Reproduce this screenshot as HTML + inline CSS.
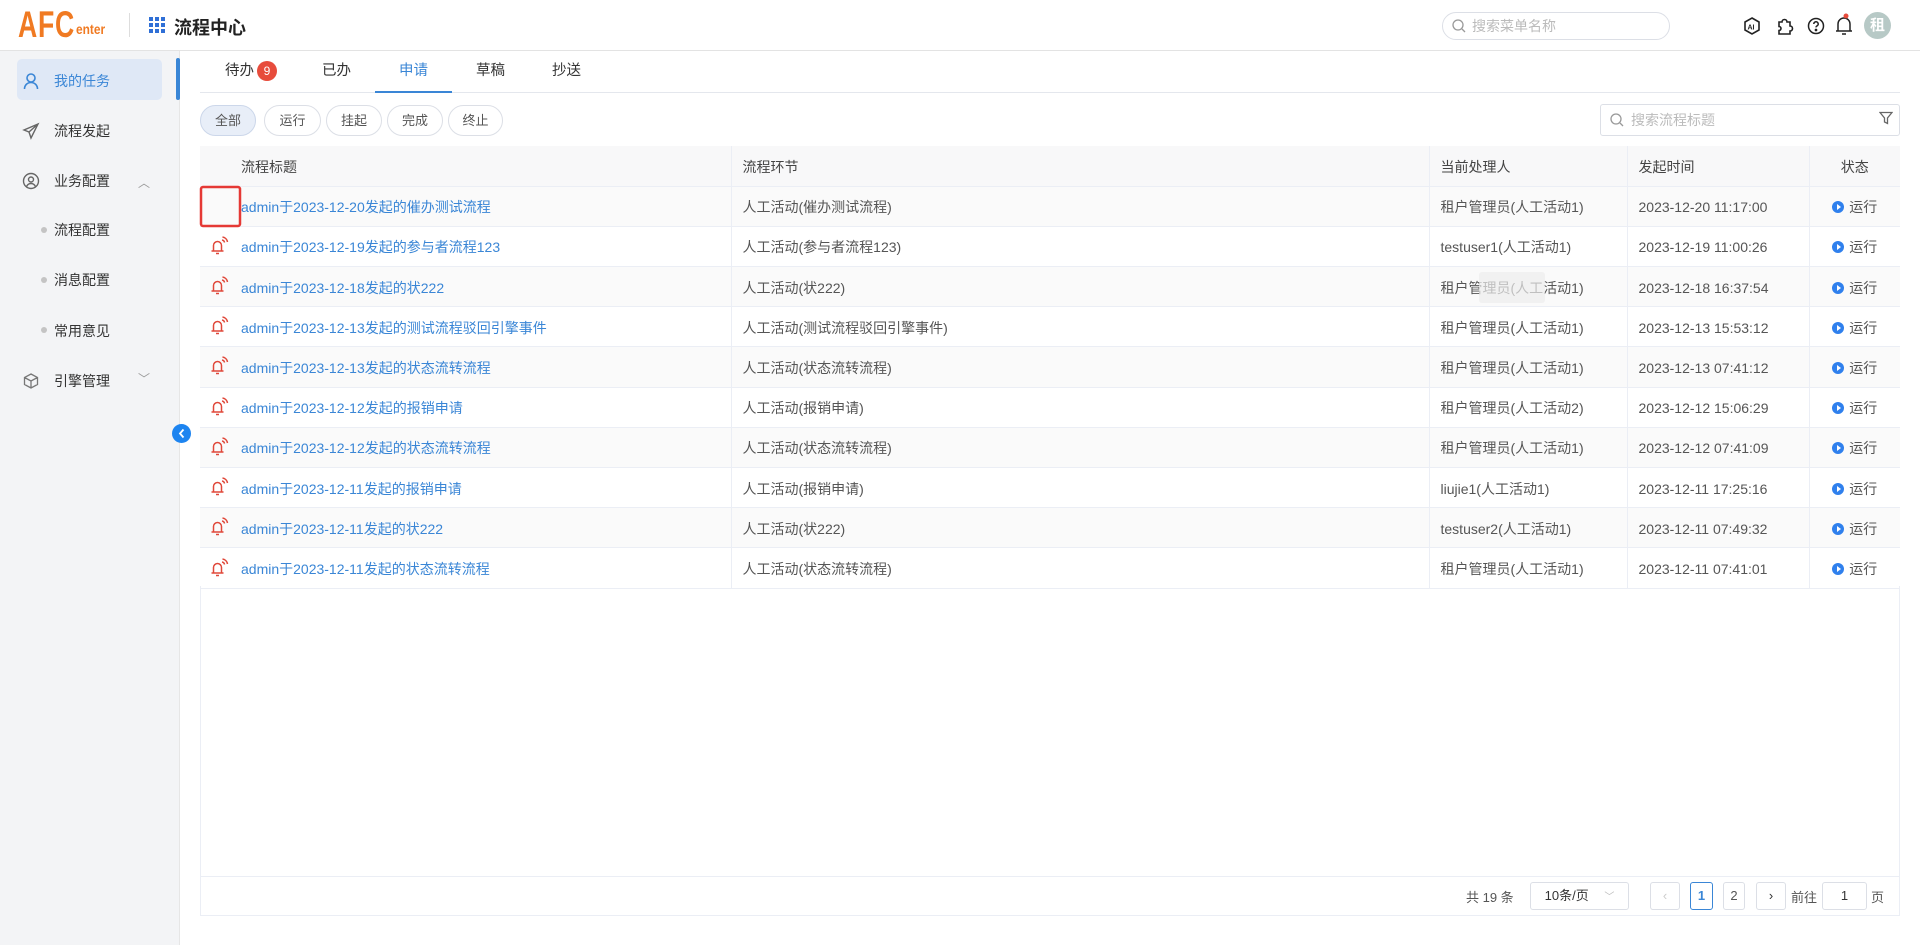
<!DOCTYPE html>
<html><head><meta charset="utf-8"><style>
*{box-sizing:border-box;margin:0;padding:0}
body{width:1920px;height:945px;overflow:hidden;background:#fff;font-family:"Liberation Sans","Noto Sans CJK SC",sans-serif;color:#555;font-size:14px;position:relative}
.abs{position:absolute}
.hdr{left:0;top:0;width:1920px;height:51px;border-bottom:1px solid #e3e3e3;background:#fff}
.side{left:0;top:51px;width:180px;height:894px;background:#f3f4f6;border-right:1px solid #e6e6e6}
.mi{position:absolute;left:54px;font-size:14px;color:#333;line-height:20px}
.ic{position:absolute;left:22px}
.dot{position:absolute;left:41px;width:6px;height:6px;border-radius:50%;background:#c4c4c4}
.tab{position:absolute;top:61px;font-size:14.5px;color:#333;line-height:20px}
.fb{position:absolute;top:105px;height:31px;border:1px solid #dcdfe6;border-radius:16px;font-size:13px;color:#555;text-align:center;line-height:29px;background:#fff}
table{position:absolute;left:200px;top:146px;width:1700px;border-collapse:collapse;table-layout:fixed}
td,th{height:40.2px;border-bottom:1px solid #ebeef5;font-weight:normal;text-align:left;padding-left:0;padding-top:2px;font-size:14px;color:#555;white-space:nowrap}
th{background:#f8f8f9;color:#444}
td+td,th+th{border-left:1px solid #ebeef5}
tr:nth-child(even) td{background:#fafafa}
.c1{padding-left:41px;color:#3a86d6}
.c2,.c3,.c4{padding-left:11px}
.c5{text-align:center}
.run{display:inline-block;width:12px;height:12px;border-radius:50%;background:#2f80ed;vertical-align:-1px;margin-right:5px;position:relative}
.run:after{content:"";position:absolute;left:4.5px;top:3px;border-left:4px solid #fff;border-top:3px solid transparent;border-bottom:3px solid transparent}
.pg{position:absolute;top:882px;height:28px;border:1px solid #dcdfe6;border-radius:3px;text-align:center;line-height:26px;font-size:13px;color:#555;background:#fff}
</style></head><body>
<div class="abs hdr"></div>
<div class="abs" style="left:18px;top:4px;font-size:37px;font-weight:bold;color:#f07a22;letter-spacing:1px;transform:scaleX(.72);transform-origin:left;white-space:nowrap">AFC</div>
<div class="abs" style="left:76px;top:21px;font-size:14px;font-weight:bold;color:#f07a22;transform:scaleX(.85);transform-origin:left">enter</div>
<div class="abs" style="left:129px;top:13px;width:1px;height:24px;background:#ddd"></div>
<svg class="abs" style="left:149px;top:17px" width="17" height="17" viewBox="0 0 17 17" fill="#2f6fd6"><rect x="0" y="0" width="4" height="4"/><rect x="6" y="0" width="4" height="4"/><rect x="12" y="0" width="4" height="4"/><rect x="0" y="6" width="4" height="4"/><rect x="6" y="6" width="4" height="4"/><rect x="12" y="6" width="4" height="4"/><rect x="0" y="12" width="4" height="4"/><rect x="6" y="12" width="4" height="4"/><rect x="12" y="12" width="4" height="4"/></svg>
<div class="abs" style="left:174px;top:14px;font-size:18px;font-weight:bold;color:#222">流程中心</div>
<div class="abs" style="left:1442px;top:12px;width:228px;height:28px;border:1px solid #dcdfe6;border-radius:14px"></div>
<svg class="abs" style="left:1452px;top:19px" width="14" height="14" viewBox="0 0 14 14" fill="none" stroke="#999" stroke-width="1.3"><circle cx="6" cy="6" r="5"/><path d="M10 10l3 3"/></svg>
<div class="abs" style="left:1472px;top:16px;font-size:14px;color:#bbb">搜索菜单名称</div>
<svg class="abs" style="left:1742px;top:16px" width="20" height="20" viewBox="0 0 20 20" fill="none" stroke="#222" stroke-width="1.6"><path d="M10 2l7 4v8l-7 4-7-4V6z"/><text x="5.5" y="13.5" font-size="7" fill="#222" stroke="none" font-weight="bold" font-family="Liberation Sans">AI</text></svg>
<svg class="abs" style="left:1775px;top:16px" width="20" height="20" viewBox="0 0 20 20" fill="none" stroke="#222" stroke-width="1.6"><path d="M4 6h3a2.5 2.5 0 1 1 5 0h3v4a2.5 2.5 0 1 1 0 5v3H4v-3.5a2 2 0 1 0 0-4z"/></svg>
<svg class="abs" style="left:1807px;top:17px" width="18" height="18" viewBox="0 0 18 18" fill="none" stroke="#222" stroke-width="1.5"><circle cx="9" cy="9" r="7.5"/><path d="M6.8 7a2.2 2.2 0 1 1 3 2c-.6.3-.8.7-.8 1.4"/><circle cx="9" cy="13" r=".6" fill="#222"/></svg>
<svg class="abs" style="left:1834px;top:13px" width="20" height="24" viewBox="0 0 20 24" fill="none" stroke="#222" stroke-width="1.5"><path d="M4 18V11a6 6 0 0 1 12 0v7M2 18h16M8 21h4"/><circle cx="12" cy="3" r="2.5" fill="#e74c3c" stroke="none"/></svg>
<div class="abs" style="left:1864px;top:12px;width:27px;height:27px;border-radius:50%;background:#b7c9c6;color:#fff;font-size:15px;font-weight:bold;text-align:center;line-height:27px">租</div>

<div class="abs side"></div>
<div class="abs" style="left:17px;top:59px;width:145px;height:41px;background:#dfe8f6;border-radius:5px"></div>
<div class="abs" style="left:176px;top:58px;width:4px;height:42px;background:#3a86d6;border-radius:2px"></div>
<svg class="ic" style="top:72px" width="18" height="18" viewBox="0 0 18 18" fill="none" stroke="#3a86d6" stroke-width="1.6"><circle cx="9" cy="6" r="4"/><path d="M2.5 17c0-4 3-6.5 6.5-6.5s6.5 2.5 6.5 6.5"/></svg>
<div class="mi" style="top:71px;color:#3a86d6">我的任务</div>
<svg class="ic" style="top:122px" width="18" height="18" viewBox="0 0 18 18" fill="none" stroke="#666" stroke-width="1.4"><path d="M16 2L2 8l5 2 2 6z M7 10l9-8"/></svg>
<div class="mi" style="top:121px">流程发起</div>
<svg class="ic" style="top:172px" width="18" height="18" viewBox="0 0 18 18" fill="none" stroke="#666" stroke-width="1.4"><circle cx="9" cy="9" r="7.5"/><circle cx="9" cy="7.5" r="2.5"/><path d="M4.5 14.5c1-2 2.5-3 4.5-3s3.5 1 4.5 3"/></svg>
<div class="mi" style="top:171px">业务配置</div>
<div class="abs" style="left:138px;top:174px;font-size:12px;color:#999">︿</div>
<div class="dot" style="top:227px"></div><div class="mi" style="top:220px">流程配置</div>
<div class="dot" style="top:277px"></div><div class="mi" style="top:270px">消息配置</div>
<div class="dot" style="top:327px"></div><div class="mi" style="top:321px">常用意见</div>
<svg class="ic" style="top:372px" width="18" height="18" viewBox="0 0 18 18" fill="none" stroke="#777" stroke-width="1.3"><path d="M9 2l6.5 3.5v7L9 16l-6.5-3.5v-7z M2.5 5.5L9 9l6.5-3.5 M9 9v7"/></svg>
<div class="mi" style="top:371px">引擎管理</div>
<div class="abs" style="left:138px;top:370px;font-size:12px;color:#999">﹀</div>
<div class="abs" style="left:172px;top:424px;width:19px;height:19px;border-radius:50%;background:#1d84f0"></div>
<svg class="abs" style="left:177px;top:428px" width="10" height="11" viewBox="0 0 10 11" fill="none" stroke="#fff" stroke-width="1.8"><path d="M6.5 1.5L3 5.5l3.5 4"/></svg>

<div class="tab" style="left:225px">待办</div>
<div class="abs" style="left:257px;top:61px;width:20px;height:20px;border-radius:50%;background:#e74c3c;color:#fff;font-size:12px;text-align:center;line-height:20px">9</div>
<div class="tab" style="left:322px">已办</div>
<div class="tab" style="left:399px;color:#3a86d6">申请</div>
<div class="tab" style="left:476px">草稿</div>
<div class="tab" style="left:552px">抄送</div>
<div class="abs" style="left:200px;top:92px;width:1700px;height:1px;background:#e4e7ed"></div>
<div class="abs" style="left:375px;top:91px;width:77px;height:2px;background:#3a86d6"></div>

<div class="fb" style="left:200px;width:56px;background:#e8eef8;border-color:#ccd7ea">全部</div>
<div class="fb" style="left:264px;width:57px">运行</div>
<div class="fb" style="left:326px;width:56px">挂起</div>
<div class="fb" style="left:387px;width:56px">完成</div>
<div class="fb" style="left:448px;width:55px">终止</div>
<div class="abs" style="left:1600px;top:104px;width:300px;height:32px;border:1px solid #dcdfe6;border-radius:3px"></div>
<svg class="abs" style="left:1610px;top:113px" width="14" height="14" viewBox="0 0 14 14" fill="none" stroke="#999" stroke-width="1.3"><circle cx="6" cy="6" r="5"/><path d="M10 10l3 3"/></svg>
<div class="abs" style="left:1631px;top:110px;font-size:14px;color:#bbb">搜索流程标题</div>
<svg class="abs" style="left:1879px;top:111px" width="14" height="14" viewBox="0 0 14 14" fill="none" stroke="#666" stroke-width="1.3"><path d="M1 1.5h12L8.5 7v5.5L5.5 11V7z"/></svg>

<table>
<colgroup><col style="width:531px"><col style="width:698px"><col style="width:198px"><col style="width:182px"><col style="width:91px"></colgroup>
<tr><th class="c1" style="color:#444">流程标题</th><th class="c2">流程环节</th><th class="c3">当前处理人</th><th class="c4">发起时间</th><th class="c5">状态</th></tr>
<tr><td class="c1">admin于2023-12-20发起的催办测试流程</td><td class="c2">人工活动(催办测试流程)</td><td class="c3">租户管理员(人工活动1)</td><td class="c4">2023-12-20 11:17:00</td><td class="c5"><span class="run"></span>运行</td></tr>
<tr><td class="c1">admin于2023-12-19发起的参与者流程123</td><td class="c2">人工活动(参与者流程123)</td><td class="c3">testuser1(人工活动1)</td><td class="c4">2023-12-19 11:00:26</td><td class="c5"><span class="run"></span>运行</td></tr>
<tr><td class="c1">admin于2023-12-18发起的状222</td><td class="c2">人工活动(状222)</td><td class="c3">租户管理员(人工活动1)</td><td class="c4">2023-12-18 16:37:54</td><td class="c5"><span class="run"></span>运行</td></tr>
<tr><td class="c1">admin于2023-12-13发起的测试流程驳回引擎事件</td><td class="c2">人工活动(测试流程驳回引擎事件)</td><td class="c3">租户管理员(人工活动1)</td><td class="c4">2023-12-13 15:53:12</td><td class="c5"><span class="run"></span>运行</td></tr>
<tr><td class="c1">admin于2023-12-13发起的状态流转流程</td><td class="c2">人工活动(状态流转流程)</td><td class="c3">租户管理员(人工活动1)</td><td class="c4">2023-12-13 07:41:12</td><td class="c5"><span class="run"></span>运行</td></tr>
<tr><td class="c1">admin于2023-12-12发起的报销申请</td><td class="c2">人工活动(报销申请)</td><td class="c3">租户管理员(人工活动2)</td><td class="c4">2023-12-12 15:06:29</td><td class="c5"><span class="run"></span>运行</td></tr>
<tr><td class="c1">admin于2023-12-12发起的状态流转流程</td><td class="c2">人工活动(状态流转流程)</td><td class="c3">租户管理员(人工活动1)</td><td class="c4">2023-12-12 07:41:09</td><td class="c5"><span class="run"></span>运行</td></tr>
<tr><td class="c1">admin于2023-12-11发起的报销申请</td><td class="c2">人工活动(报销申请)</td><td class="c3">liujie1(人工活动1)</td><td class="c4">2023-12-11 17:25:16</td><td class="c5"><span class="run"></span>运行</td></tr>
<tr><td class="c1">admin于2023-12-11发起的状222</td><td class="c2">人工活动(状222)</td><td class="c3">testuser2(人工活动1)</td><td class="c4">2023-12-11 07:49:32</td><td class="c5"><span class="run"></span>运行</td></tr>
<tr><td class="c1">admin于2023-12-11发起的状态流转流程</td><td class="c2">人工活动(状态流转流程)</td><td class="c3">租户管理员(人工活动1)</td><td class="c4">2023-12-11 07:41:01</td><td class="c5"><span class="run"></span>运行</td></tr>
</table>
<div class="abs" style="left:1479px;top:272px;width:66px;height:31px;background:#ececec;border-radius:3px;opacity:.7"></div>
<svg class="abs" style="left:0;top:0;pointer-events:none" width="1920" height="945">
<defs><g id="b" fill="none" stroke="#e0483a" stroke-width="1.5"><path d="M1.5 15h12M3.5 15V9.5a4 4 0 0 1 8 0V15M6 17.5h3"/><path d="M12 4a3 3 0 0 1 2.5 2.5M12.5 1a6 6 0 0 1 5 5"/></g></defs>
<use href="#b" x="210" y="236"/><use href="#b" x="210" y="276"/><use href="#b" x="210" y="316"/><use href="#b" x="210" y="356"/><use href="#b" x="210" y="397"/><use href="#b" x="210" y="437"/><use href="#b" x="210" y="477"/><use href="#b" x="210" y="517"/><use href="#b" x="210" y="558"/>
<rect x="201" y="187" width="39" height="39" rx="2" fill="none" stroke="#e53935" stroke-width="2.5"/>
</svg>
<div class="abs" style="left:200px;top:586px;width:1px;height:330px;background:#ebeef5"></div>
<div class="abs" style="left:1899px;top:586px;width:1px;height:330px;background:#ebeef5"></div>
<div class="abs" style="left:200px;top:876px;width:1700px;height:1px;background:#ebeef5"></div>
<div class="abs" style="left:200px;top:915px;width:1700px;height:1px;background:#ebeef5"></div>
<div class="abs" style="left:1466px;top:887px;font-size:13px;color:#555">共 19 条</div>
<div class="pg" style="left:1530px;width:99px;color:#333">10条/页 <span style="color:#bbb;font-size:10px;margin-left:12px">﹀</span></div>
<div class="pg" style="left:1650px;width:30px;color:#ccc">‹</div>
<div class="pg" style="left:1690px;width:23px;border-color:#3a86d6;color:#3a86d6;font-weight:bold">1</div>
<div class="pg" style="left:1723px;width:22px">2</div>
<div class="pg" style="left:1756px;width:30px;color:#333">›</div>
<div class="abs" style="left:1791px;top:887px;font-size:13px">前往</div>
<div class="pg" style="left:1822px;width:45px;color:#333">1</div>
<div class="abs" style="left:1871px;top:887px;font-size:13px">页</div>
</body></html>
